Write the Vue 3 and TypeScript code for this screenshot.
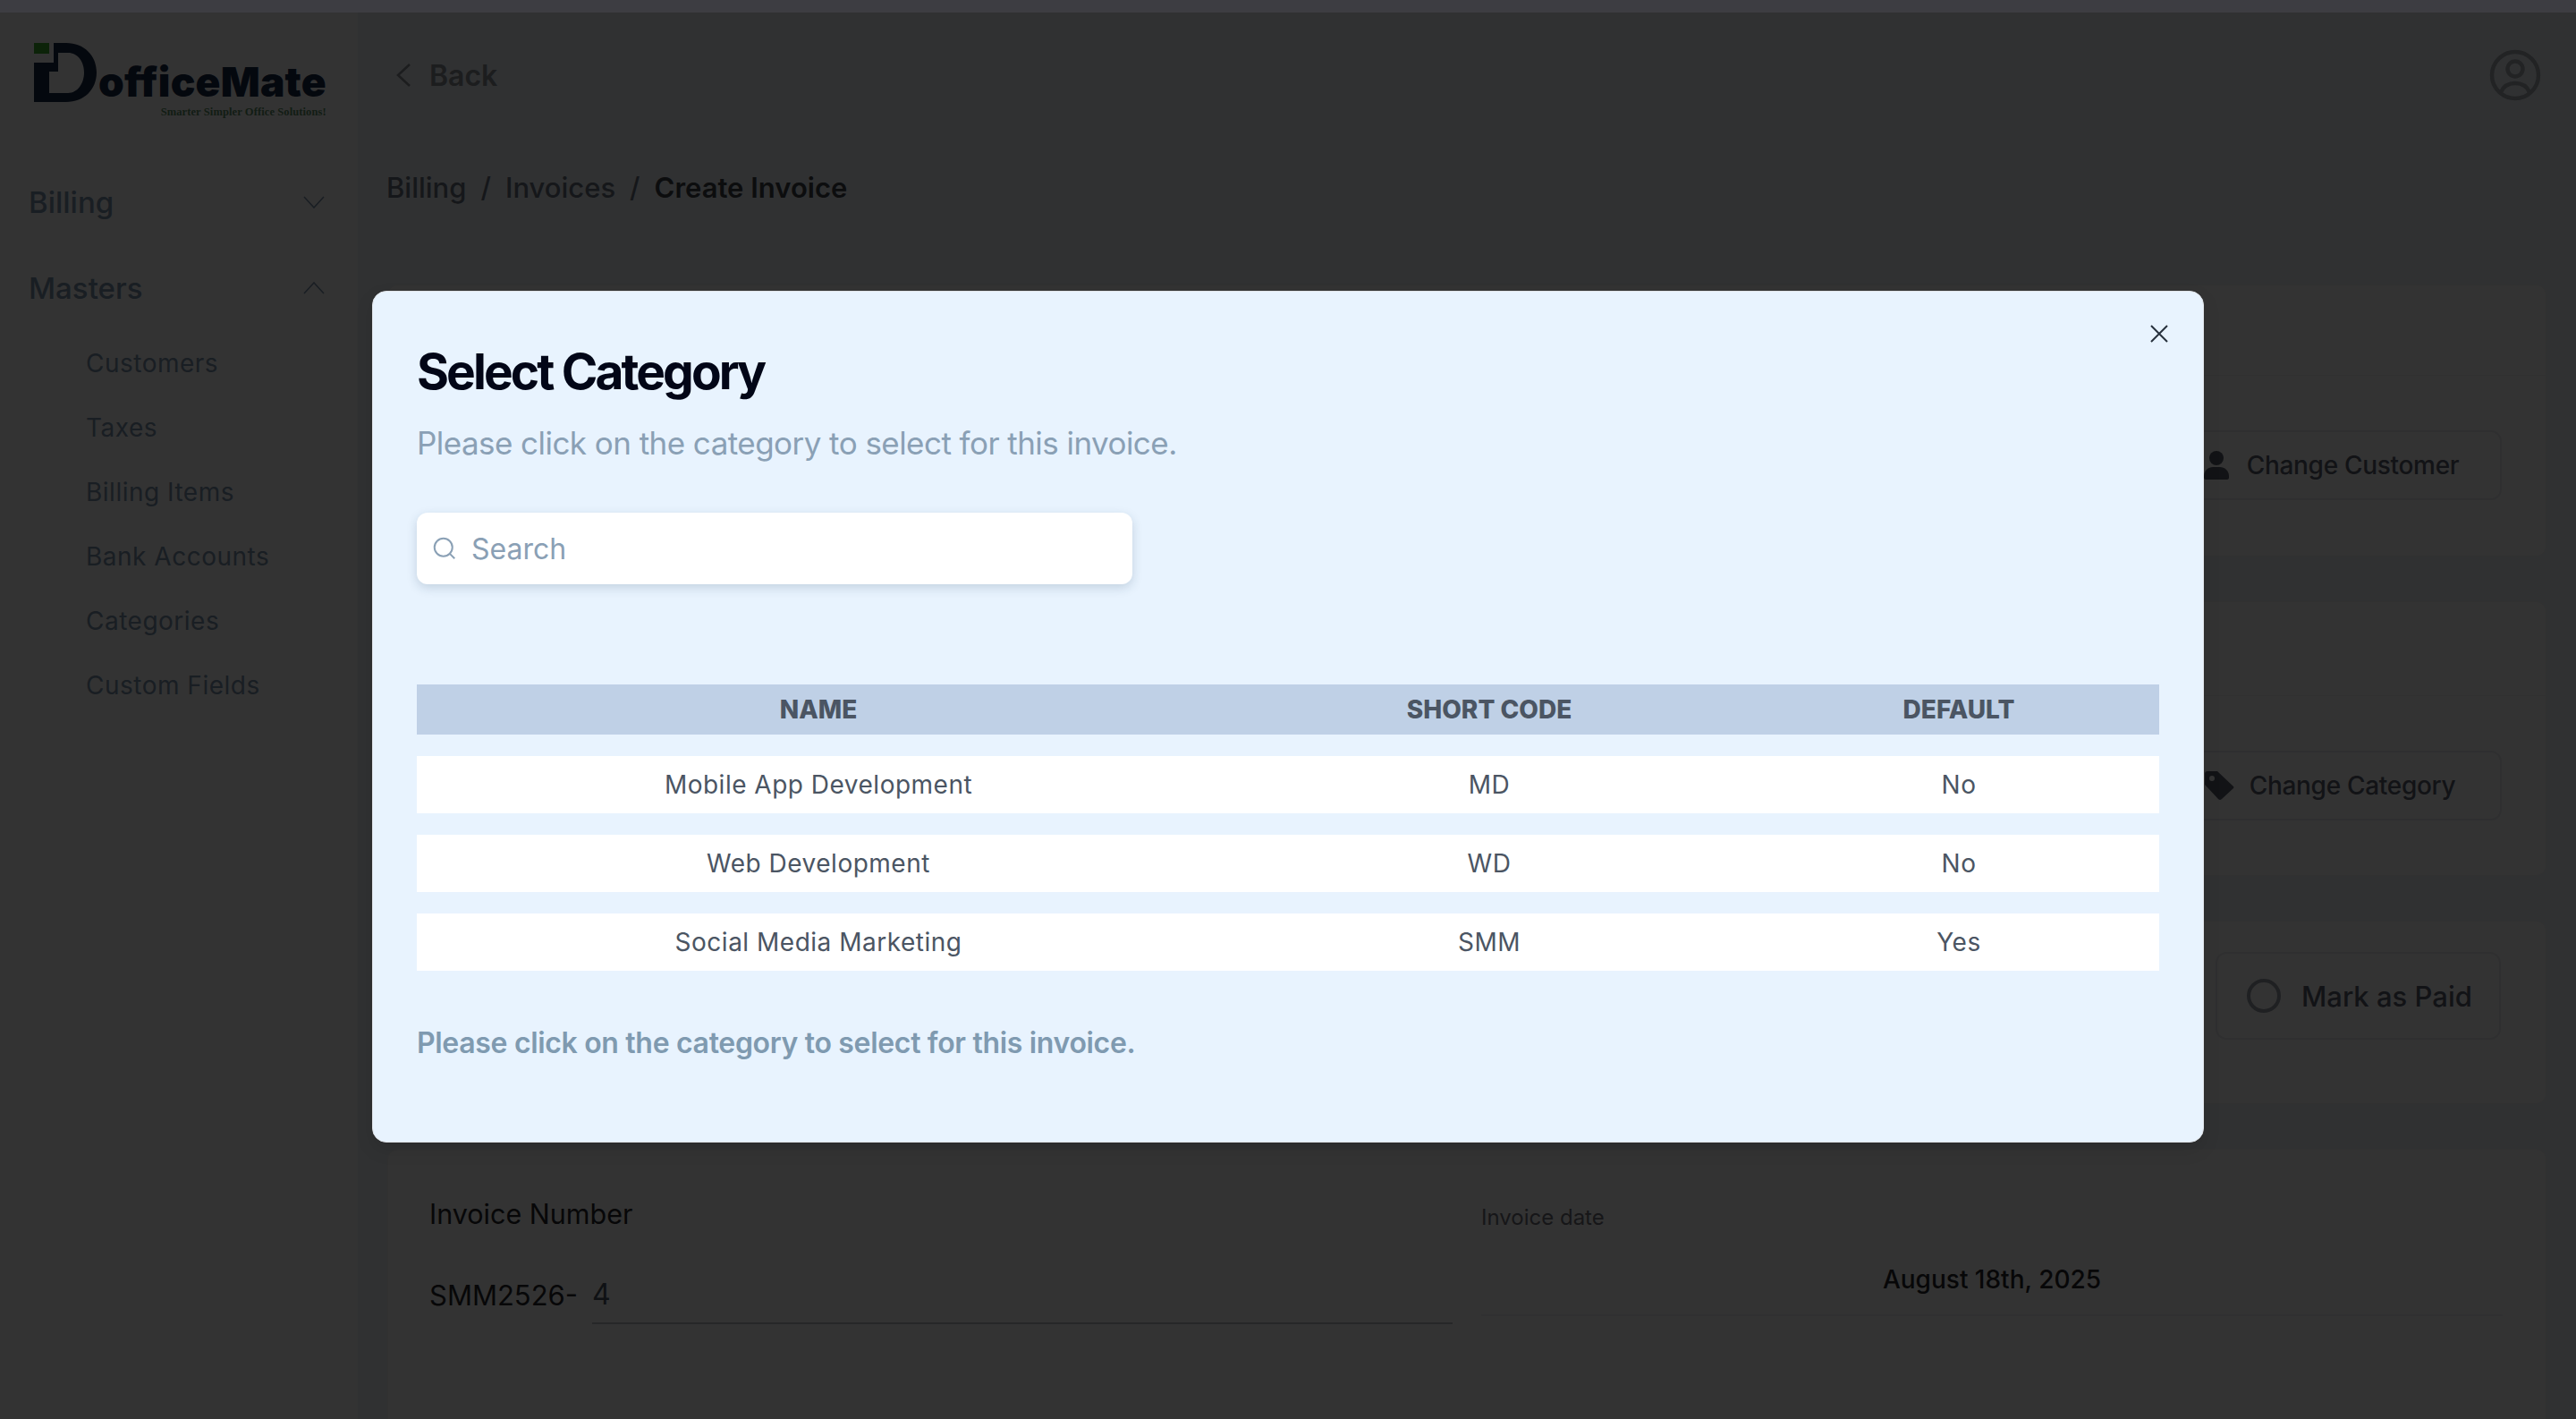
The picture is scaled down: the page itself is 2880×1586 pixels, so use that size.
<script setup lang="ts">
const masters = ['Customers', 'Taxes', 'Billing Items', 'Bank Accounts', 'Categories', 'Custom Fields']

const categories = [
  { name: 'Mobile App Development', code: 'MD', isDefault: 'No' },
  { name: 'Web Development', code: 'WD', isDefault: 'No' },
  { name: 'Social Media Marketing', code: 'SMM', isDefault: 'Yes' },
]
</script>

<template>
  <div class="strip"></div>
  <div class="page">
    <aside class="sidebar">
      <div class="brand">
        <svg class="brand-mark" width="72" height="68" viewBox="0 0 72 68">
          <rect x="0" y="0" width="17" height="12" fill="#3fb030" />
          <path
            fill="#182848"
            fill-rule="evenodd"
            d="M22 0H36C56 0 70 14 70 33C70 52 56 66 36 66H0V22H22ZM27 11V32H17V56H38C49 56 56 45 56 33C56 21 49 11 38 11Z"
          />
        </svg>
        <div class="brand-text">
          <div class="brand-name">officeMate</div>
          <div class="brand-tag">Smarter Simpler Office Solutions!</div>
        </div>
      </div>

      <div class="nav-group">
        <span>Billing</span>
        <svg width="24" height="14" viewBox="0 0 24 14" fill="none" stroke="currentColor" stroke-width="1.6"><path d="M1 1L12 13L23 1" /></svg>
      </div>
      <div class="nav-group">
        <span>Masters</span>
        <svg width="24" height="14" viewBox="0 0 24 14" fill="none" stroke="currentColor" stroke-width="1.6"><path d="M1 13L12 1L23 13" /></svg>
      </div>
      <ul class="nav-list">
        <li v-for="item in masters" :key="item">{{ item }}</li>
      </ul>
    </aside>

    <main class="main">
      <div class="topbar">
        <div class="back">
          <svg width="18" height="26" viewBox="0 0 18 26" fill="none" stroke="currentColor" stroke-width="2.6"><path d="M16 1L3 13L16 25" /></svg>
          <span>Back</span>
        </div>
        <svg class="avatar" width="58" height="58" viewBox="0 0 58 58" fill="none" stroke="#a8adb5" stroke-width="4.5">
          <circle cx="29" cy="29" r="26" />
          <circle cx="29" cy="22" r="8.5" />
          <path d="M13 48C16 41 22 38 29 38C36 38 42 41 45 48" />
        </svg>
      </div>

      <div class="crumbs">
        <span>Billing</span><i>/</i><span>Invoices</span><i>/</i><b>Create Invoice</b>
      </div>

      <section class="card split">
        <div class="card-head"></div>
        <div class="card-body">
          <button class="outline">
            <svg width="28" height="32" viewBox="0 0 28 32" fill="currentColor">
              <circle cx="14" cy="8" r="8" />
              <path d="M0 28C0 22 5 18 10 18H18C23 18 28 22 28 28V30C28 31 27 32 26 32H2C1 32 0 31 0 30Z" />
            </svg>
            Change Customer
          </button>
        </div>
      </section>

      <section class="card split">
        <div class="card-head"></div>
        <div class="card-body">
          <button class="outline tight">
            <svg width="34" height="34" viewBox="0 0 34 34" fill="currentColor" fill-rule="evenodd">
              <path d="M1 4Q1 1 4 1H15L33 18Q34 19 33 20L20 32Q18 34 16 32L1 16ZM9 6A3 3 0 1 0 9 12A3 3 0 1 0 9 6Z" />
            </svg>
            Change Category
          </button>
        </div>
      </section>

      <section class="card paid-card">
        <div class="paid">
          <span class="ring"></span>
          <span>Mark as Paid</span>
        </div>
      </section>

      <section class="card invoice">
        <div class="inv-col">
          <div class="inv-label">Invoice Number</div>
          <div class="inv-number">
            <span>SMM2526-</span>
            <input class="inv-input" value="4" />
          </div>
        </div>
        <div class="inv-col">
          <div class="date-label">Invoice date</div>
          <div class="date-value">August 18th, 2025</div>
        </div>
      </section>
    </main>

    <div class="overlay">
      <div class="modal">
        <svg class="close" width="20" height="20" viewBox="0 0 20 20" fill="none" stroke="currentColor" stroke-width="2"><path d="M1 1L19 19M19 1L1 19" /></svg>
        <h2>Select Category</h2>
        <p class="sub">Please click on the category to select for this invoice.</p>

        <label class="search">
          <svg width="30" height="30" viewBox="0 0 24 24" fill="none" stroke="currentColor" stroke-width="1.6">
            <circle cx="11" cy="11" r="8" />
            <path d="m21 21-4.3-4.3" />
          </svg>
          <input placeholder="Search" />
        </label>

        <table class="table">
          <colgroup>
            <col style="width: 898px" />
            <col style="width: 602px" />
            <col style="width: 448px" />
          </colgroup>
          <thead>
            <tr>
              <th>NAME</th>
              <th>SHORT CODE</th>
              <th>DEFAULT</th>
            </tr>
          </thead>
          <tbody>
            <tr v-for="row in categories" :key="row.code">
              <td>{{ row.name }}</td>
              <td>{{ row.code }}</td>
              <td>{{ row.isDefault }}</td>
            </tr>
          </tbody>
        </table>

        <p class="note">Please click on the category to select for this invoice.</p>
      </div>
    </div>
  </div>
</template>

<style>
html,
body {
  margin: 0;
  height: 100%;
  overflow: hidden;
  background: #f0f5fa;
}
</style>

<style scoped>
.strip {
  height: 14px;
  background: #3d3d42;
}

.page {
  position: relative;
  display: flex;
  height: 1572px;
  overflow: hidden;
  background: #f0f5fa;
  font-family: Inter, 'Liberation Sans', sans-serif;
}

.sidebar {
  width: 400px;
  flex: none;
  box-sizing: border-box;
  background: #fff;
  color: #7d94ad;
}

.brand {
  display: flex;
  align-items: flex-start;
  padding: 34px 0 0 38px;
  height: 164px;
  box-sizing: border-box;
}

.brand-mark {
  flex: none;
}

.brand-name {
  margin: 20px 0 0 0;
  font-size: 46px;
  line-height: 46px;
  font-weight: 900;
  letter-spacing: 0.2px;
  color: #182848;
}

.brand-tag {
  margin-top: 4px;
  font-family: 'Liberation Serif', serif;
  font-size: 12.5px;
  line-height: 15px;
  font-weight: 700;
  letter-spacing: 0.1px;
  text-align: right;
  color: #5c8f66;
}

.nav-group {
  display: flex;
  align-items: center;
  justify-content: space-between;
  height: 96px;
  padding: 0 37px 0 32px;
  font-size: 33px;
  font-weight: 500;
}

.nav-list {
  list-style: none;
  margin: 0;
  padding: 0 0 0 96px;
  font-size: 28px;
  letter-spacing: 0.5px;
}

.nav-list li {
  height: 72px;
  line-height: 72px;
}

.main {
  flex: 1;
  min-width: 0;
  padding-right: 33px;
  padding-left: 33px;
}

.topbar {
  display: flex;
  align-items: center;
  justify-content: space-between;
  height: 140px;
  padding-left: 9px;
  padding-right: 6px;
}

.back {
  display: flex;
  align-items: center;
  gap: 20px;
  font-size: 32px;
  font-weight: 600;
  color: #8a8f98;
}

.crumbs {
  display: flex;
  align-items: center;
  gap: 16px;
  height: 40px;
  margin: 35px 0 89px -1px;
  font-size: 31px;
  font-weight: 500;
  color: #6c7280;
}

.crumbs i {
  font-style: normal;
}

.crumbs b {
  font-weight: 600;
  color: #3c4149;
}

.card {
  border: 1px solid #f4f4f5;
  border-radius: 12px;
  background: #fff;
  box-sizing: border-box;
  margin-bottom: 50px;
}

.split {
  height: 304px;
}

.split + .split {
  height: 307px;
}

.card-head {
  height: 101px;
  border-bottom: 1px solid #f4f4f5;
  box-sizing: border-box;
}

.split + .split .card-head {
  height: 105px;
}

.card-body {
  display: flex;
  justify-content: flex-end;
  padding: 61px 49px 0 0;
}

.outline {
  display: flex;
  align-items: center;
  justify-content: center;
  gap: 20px;
  height: 78px;
  width: 373px;
  padding: 0 8px 0 0;
  border: 2px solid #e8eaee;
  border-radius: 12px;
  background: #fff;
  font-family: inherit;
  font-size: 28px;
  font-weight: 500;
  letter-spacing: -0.3px;
  color: #5a6270;
}

.outline.tight {
  gap: 17px;
  padding-right: 12px;
}

.paid-card {
  display: flex;
  justify-content: flex-end;
  height: 205px;
  padding: 34px 50px 0 0;
}

.paid {
  display: flex;
  align-items: center;
  gap: 23px;
  box-sizing: border-box;
  width: 319px;
  height: 98px;
  padding-left: 33px;
  border: 2px solid #e8eaee;
  border-radius: 12px;
  font-size: 31px;
  font-weight: 500;
  color: #5a6270;
}

.ring {
  width: 38px;
  height: 38px;
  box-sizing: border-box;
  border: 4px solid #9aa0aa;
  border-radius: 50%;
}

.invoice {
  display: grid;
  grid-template-columns: 1144px 1142px;
  column-gap: 32px;
  height: 400px;
  padding: 48px 0 0 46px;
  margin-bottom: 0;
}

.inv-label {
  font-size: 30.5px;
  line-height: 48px;
  color: #27272a;
}

.inv-number {
  display: flex;
  align-items: center;
  gap: 16px;
  margin-top: 43px;
  font-size: 31px;
  color: #27272a;
}

.inv-number span {
  margin-top: -10px;
}

.inv-input {
  flex: 1;
  height: 44px;
  padding: 0 0 10px;
  border: 0;
  border-bottom: 2px solid #bfc3c9;
  background: transparent;
  font-family: inherit;
  font-size: 32px;
  color: #4b5563;
  outline: none;
}

.date-label {
  padding-top: 8px;
  font-size: 24px;
  line-height: 40px;
  color: #71717a;
}

.date-value {
  height: 80px;
  margin-top: 10px;
  border-bottom: 2px solid #f0f1f3;
  padding-top: 22px;
  box-sizing: border-box;
  font-size: 28px;
  font-weight: 500;
  text-align: center;
  color: #27272a;
}

.overlay {
  position: absolute;
  inset: 0;
  display: flex;
  align-items: center;
  justify-content: center;
  background: rgba(0, 0, 0, 0.8);
}

.modal {
  position: relative;
  box-sizing: border-box;
  width: 2048px;
  height: 952px;
  margin-top: 2px;
  padding: 55px 49px 49px;
  border: 1px solid #dfe3e8;
  border-radius: 16px;
  background: #e8f3fe;
  box-shadow: 0 8px 20px rgba(0, 0, 0, 0.1);
}

.close {
  position: absolute;
  top: 37px;
  right: 39px;
  color: #27303d;
}

h2 {
  margin: 0;
  font-size: 55px;
  line-height: 68px;
  font-weight: 700;
  letter-spacing: -2.9px;
  color: #020617;
}

.sub {
  margin: 20px 0 0;
  font-size: 35px;
  line-height: 52px;
  letter-spacing: -0.55px;
  color: #8aa0b5;
}

.search {
  display: flex;
  align-items: center;
  gap: 13px;
  box-sizing: border-box;
  width: 800px;
  height: 80px;
  margin-top: 52px;
  padding-left: 16px;
  border-radius: 12px;
  background: #fff;
  box-shadow: 0 4px 12px rgba(30, 60, 90, 0.18);
  color: #8aa0b5;
}

.search input {
  flex: 1;
  min-width: 0;
  border: 0;
  outline: none;
  background: transparent;
  font-family: inherit;
  font-size: 32px;
  color: #4b5563;
}

.search input::placeholder {
  color: #8aa0b5;
  opacity: 1;
}

.table {
  width: 1948px;
  margin-top: 88px;
  table-layout: fixed;
  border-collapse: separate;
  border-spacing: 0 24px;
  text-align: center;
}

.table th {
  height: 56px;
  padding: 0;
  background: #bfd0e6;
  font-size: 28px;
  font-weight: 800;
  letter-spacing: 0;
  color: #4b5563;
}

.table td {
  height: 64px;
  padding: 0;
  background: #fff;
  font-size: 28px;
  letter-spacing: 0.5px;
  color: #4b5563;
}

.note {
  margin: 25px 0 0;
  font-size: 32px;
  line-height: 64px;
  font-weight: 600;
  letter-spacing: -0.33px;
  color: #7f9ab0;
}
</style>
